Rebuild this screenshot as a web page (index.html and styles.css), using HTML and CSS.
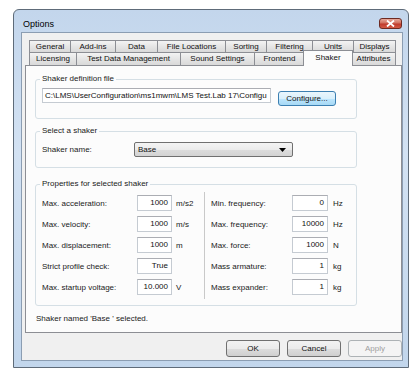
FILE: index.html
```html
<!DOCTYPE html>
<html>
<head>
    <link rel="stylesheet" href="styles.css">
</head>
<body>
    <div class="window">
        <div class="titlebar">
            <span class="title">Options</span>
            <button class="close-btn">
                <svg width="9" height="7" viewBox="0 0 9 7"><path d="M1 0.5 L8 6.5 M8 0.5 L1 6.5" stroke="#fff" stroke-width="1.8"/></svg>
            </button>
        </div>

        <div class="client">
            <div class="tabstrip">
                <div class="tab-row row-top">
                    <div class="tab">General</div>
                    <div class="tab">Add-ins</div>
                    <div class="tab">Data</div>
                    <div class="tab">File Locations</div>
                    <div class="tab">Sorting</div>
                    <div class="tab">Filtering</div>
                    <div class="tab">Units</div>
                    <div class="tab">Displays</div>
                </div>
                <div class="tab-row row-bottom">
                    <div class="tab">Licensing</div>
                    <div class="tab">Test Data Management</div>
                    <div class="tab">Sound Settings</div>
                    <div class="tab">Frontend</div>
                    <div class="tab active">Shaker</div>
                    <div class="tab">Attributes</div>
                </div>
            </div>

            <div class="panel">
                <fieldset class="group group-file">
                    <legend>Shaker definition file</legend>
                    <div class="file-row">
                        <div class="textbox path">C:\LMS\UserConfiguration\ms1mwm\LMS Test.Lab 17\Configu</div>
                        <button class="btn btn-default">Configure...</button>
                    </div>
                </fieldset>

                <fieldset class="group group-select">
                    <legend>Select a shaker</legend>
                    <div class="select-row">
                        <span class="select-label">Shaker name:</span>
                        <div class="combo">
                            <span>Base</span>
                            <svg width="7" height="4" viewBox="0 0 7 4"><path d="M0 0 H7 L3.5 4 Z" fill="#000"/></svg>
                        </div>
                    </div>
                </fieldset>

                <fieldset class="group group-props">
                    <legend>Properties for selected shaker</legend>
                    <div class="props">
                        <div class="col col-left">
                            <div class="field"><span class="label">Max. acceleration:</span><div class="textbox num">1000</div><span class="unit">m/s2</span></div>
                            <div class="field"><span class="label">Max. velocity:</span><div class="textbox num">1000</div><span class="unit">m/s</span></div>
                            <div class="field"><span class="label">Max. displacement:</span><div class="textbox num">1000</div><span class="unit">m</span></div>
                            <div class="field"><span class="label">Strict profile check:</span><div class="textbox num">True</div><span class="unit"></span></div>
                            <div class="field"><span class="label">Max. startup voltage:</span><div class="textbox num">10.000</div><span class="unit">V</span></div>
                        </div>
                        <div class="divider"></div>
                        <div class="col col-right">
                            <div class="field"><span class="label">Min. frequency:</span><div class="textbox num">0</div><span class="unit">Hz</span></div>
                            <div class="field"><span class="label">Max. frequency:</span><div class="textbox num">10000</div><span class="unit">Hz</span></div>
                            <div class="field"><span class="label">Max. force:</span><div class="textbox num">1000</div><span class="unit">N</span></div>
                            <div class="field"><span class="label">Mass armature:</span><div class="textbox num">1</div><span class="unit">kg</span></div>
                            <div class="field"><span class="label">Mass expander:</span><div class="textbox num">1</div><span class="unit">kg</span></div>
                        </div>
                    </div>
                </fieldset>

                <div class="status">Shaker named 'Base ' selected.</div>
            </div>

            <div class="dialog-buttons">
                <button class="btn">OK</button>
                <button class="btn">Cancel</button>
                <button class="btn" disabled>Apply</button>
            </div>
        </div>
    </div>
</body>
</html>
```

FILE: styles.css
```css
body {
    margin: 0;
    background: #fff;
    font-family: "Liberation Sans", Arial, sans-serif;
    font-size: 8px;
    color: #1a1a1a;
}

.window {
    box-sizing: border-box;
    width: 396px;
    height: 359px;
    margin: 9px 0 0 13px;
    border: 1px solid #5e6b79;
    border-radius: 6px 6px 0 0;
    background: linear-gradient(#c3d6ec, #d3e2f3 40%, #c2d6ec);
    padding: 0 5px 6px 7px;
    display: flex;
    flex-direction: column;
}

.titlebar {
    height: 22px;
    display: flex;
    align-items: flex-start;
}

.title {
    font-size: 9px;
    color: #000;
    margin: 9px 0 0 2px;
}

.close-btn {
    margin: 8px 1px 0 auto;
    width: 23px;
    height: 11px;
    padding: 0;
    border: 1px solid #6d2a22;
    border-radius: 3px;
    background: linear-gradient(#e8a99b, #d1705e 45%, #c0392b 55%, #d35a44);
    display: flex;
    align-items: center;
    justify-content: center;
}

.client {
    flex: 1;
    background: #f0f0f0;
    border: 1px solid #8b9db2;
    padding: 7px 0 0 3px;
}

/* tabs */

.tabstrip {
    margin-left: 4px;
}

.tab-row {
    display: flex;
}

.tab {
    box-sizing: border-box;
    border: 1px solid #8c8e94;
    border-bottom: none;
    border-left: none;
    background: linear-gradient(#f3f3f3, #e5e5e5 50%, #d9d9d9);
    text-align: center;
    line-height: 11px;
    color: #111;
    white-space: nowrap;
}

.tab:first-child {
    border-left: 1px solid #8c8e94;
}

.row-top .tab {
    height: 12px;
}

.row-bottom .tab {
    height: 13px;
    line-height: 12px;
}

.row-top .tab:nth-child(1) { width: 42px; }
.row-top .tab:nth-child(2) { width: 45px; }
.row-top .tab:nth-child(3) { width: 42px; }
.row-top .tab:nth-child(4) { width: 68px; }
.row-top .tab:nth-child(5) { width: 41px; }
.row-top .tab:nth-child(6) { width: 46px; }
.row-top .tab:nth-child(7) { width: 41px; }
.row-top .tab:nth-child(8) { width: 42px; }

.row-bottom .tab:nth-child(1) { width: 48px; }
.row-bottom .tab:nth-child(2) { width: 104px; }
.row-bottom .tab:nth-child(3) { width: 74px; }
.row-bottom .tab:nth-child(4) { width: 50px; }
.row-bottom .tab:nth-child(5) { width: 47px; }
.row-bottom .tab:nth-child(6) { width: 44px; }

.row-bottom .tab.active {
    height: 16px;
    margin: -2px -1px -1px -2px;
    width: 50px;
    border-left: 1px solid #8c8e94;
    background: #fcfcfc;
    line-height: 14px;
    z-index: 1;
}

.panel {
    box-sizing: border-box;
    height: 268px;
    border: 1px solid #8c8e94;
    background: #fcfcfc;
    padding: 8px 0 0 9px;
}

/* group boxes */

.group {
    width: 322px;
    box-sizing: border-box;
    margin: 0;
    border: 1px solid #d5dfe5;
    border-radius: 3px;
    padding: 0 6px 0 6px;
    min-width: 0;
}

.group legend {
    padding: 0 2px;
    margin-left: -2px;
    line-height: 10px;
    color: #1a1a1a;
}

.group-file {
    padding-top: 4px;
    padding-bottom: 12px;
}

.group-select {
    margin-top: 7px;
    padding-top: 6px;
    padding-bottom: 10px;
}

.group-props {
    margin-top: 11px;
    padding-top: 6px;
    padding-bottom: 10px;
}

.file-row {
    display: flex;
    align-items: flex-start;
}

.textbox {
    box-sizing: border-box;
    background: #fff;
    border: 1px solid #c5cbd2;
    border-top-color: #abadb3;
    color: #111;
    white-space: nowrap;
    overflow: hidden;
}

.path {
    width: 229px;
    height: 15px;
    line-height: 13px;
    padding-left: 2px;
}

.btn {
    box-sizing: border-box;
    font-family: "Liberation Sans", Arial, sans-serif;
    font-size: 8px;
    color: #111;
    height: 16px;
    padding: 0;
    border: 1px solid #707070;
    border-radius: 3px;
    background: linear-gradient(#f2f2f2, #ebebeb 50%, #dddddd 51%, #cfcfcf);
}

.btn-default {
    width: 58px;
    height: 15px;
    margin: 3px 0 0 7px;
    border-color: #3c7fb1;
    background: linear-gradient(#eaf6fd, #d9f0fc 50%, #bee6fd 51%, #a7d9f5);
}

.select-row {
    display: flex;
    align-items: center;
}

.select-label {
    width: 92px;
}

.combo {
    box-sizing: border-box;
    width: 159px;
    height: 15px;
    border: 1px solid #707070;
    border-radius: 2px;
    background: linear-gradient(#f4f4f4, #ebebeb 50%, #dddddd 51%, #d3d3d3);
    display: flex;
    align-items: center;
    justify-content: space-between;
    padding: 0 6px 0 3px;
    color: #111;
}

/* properties */

.props {
    display: flex;
}

.col-left {
    width: 162px;
}

.divider {
    width: 1px;
    background: #c9c9c9;
    margin: -3px 0 -4px 0;
}

.col-right {
    margin-left: 6px;
}

.field {
    display: flex;
    align-items: center;
    height: 16px;
    margin-bottom: 5px;
}

.field:last-child {
    margin-bottom: 0;
}

.field .textbox.num {
    height: 16px;
    line-height: 14px;
    text-align: right;
    padding-right: 3px;
}

.col-left .label {
    width: 95px;
}

.col-left .num {
    width: 35px;
}

.col-left .unit {
    margin-left: 4px;
}

.col-right .label {
    width: 81px;
}

.col-right .num {
    width: 36px;
}

.col-right .unit {
    margin-left: 5px;
}

.status {
    margin: 8px 0 0 1px;
    line-height: 10px;
}

.dialog-buttons {
    display: flex;
    justify-content: flex-end;
    gap: 7px;
    margin-top: 7px;
}

.dialog-buttons .btn {
    width: 54px;
    height: 17px;
}

.dialog-buttons .btn:disabled {
    color: #a0a0a0;
    border-color: #adb2b5;
    background: #f4f4f4;
}
```
